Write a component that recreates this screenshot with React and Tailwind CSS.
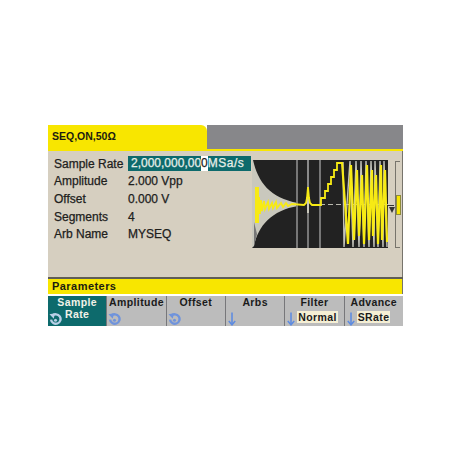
import React from "react";

const params = [
  { label: "Sample Rate", value: "2,000,000,000", active: true },
  { label: "Amplitude", value: "2.000 Vpp" },
  { label: "Offset", value: "0.000 V" },
  { label: "Segments", value: "4" },
  { label: "Arb Name", value: "MYSEQ" },
];

const softkeys = [
  { lines: ["Sample", "Rate"], icon: "knob", active: true },
  { lines: ["Amplitude"], icon: "knob" },
  { lines: ["Offset"], icon: "knob" },
  { lines: ["Arbs"], icon: "arrow" },
  { lines: ["Filter"], icon: "arrow", chip: "Normal" },
  { lines: ["Advance"], icon: "arrow", chip: "SRate" },
];

// chirp at the right of the plot, x of each yellow peak
const peaks = [341, 351, 357, 362, 367, 372, 376, 381, 385];

const yellowChirp = () => {
  let d = "M342 162";
  peaks.slice(1).forEach((x, i) => {
    d += ` L${x - 3} ${244 - (i % 3) * 4} L${x} ${165 + (i % 3) * 5}`;
  });
  return d + " L387 242";
};

const grayChirp = () => {
  let d = "M343 162 L344 247";
  peaks.slice(1).forEach((x) => {
    d += ` L${x - 1} 161 L${x + 2} 247`;
  });
  return d;
};

const KnobIcon = ({ color }) => (
  <svg width="13" height="14" viewBox="0 0 12 13" fill="none" stroke={color}>
    <path d="M3 3.6 A4.4 4.4 0 1 1 1.9 7" strokeWidth="2.2" />
    <path d="M0.4 2 L5.4 1.2 L4.4 6.2 Z" fill={color} stroke="none" />
    <circle cx="6" cy="7.6" r="1.4" fill={color} stroke="none" />
  </svg>
);

const ArrowIcon = () => (
  <svg width="8" height="14" viewBox="0 0 8 14" fill="none" stroke="#5f8ce0" strokeWidth="1.6">
    <path d="M4 0.5 V12.5" />
    <path d="M0.8 9 L4 12.8 L7.2 9" />
  </svg>
);

const Waveform = () => (
  <svg width="136" height="88" viewBox="252 160 136 88" className="bg-[#222222]">
    <path d="M252 160 L253 160 C258 182 270 198 298 203 L298 206 C272 210 258 226 254 246 L252 248 Z" fill="#c9c8bd" />
    <path d="M254 222 L254 246 L257 234 Z" fill="#777777" />
    <path d="M297 160 V248" stroke="#777777" strokeWidth="2" />
    <path d="M308 160 V187" stroke="#8a8a8a" strokeWidth="2" />
    <path d="M308 187 V213" stroke="#c9c8bd" strokeWidth="2" />
    <path d="M308 213 V248" stroke="#777777" strokeWidth="2" />
    <path d="M320 160 V248" stroke="#777777" strokeWidth="2" />
    <path d="M320 204.5 H388" stroke="#b9b8ae" strokeWidth="1" strokeDasharray="5 3" />
    <path d={grayChirp()} stroke="#c4c4bb" strokeWidth="1.4" fill="none" />
    <path d={yellowChirp()} stroke="#f7ea14" strokeWidth="2.2" fill="none" />
    <path d="M257 187 V223" stroke="#f7ea14" strokeWidth="4" />
    <path
      d="M259 197 L260 214 L261 200 L262 211 L264 201 L265 209 L268 202 L269 209 L272 203 L273 208 L276 202 L277 208 L281 203 L283 207 L286 203 L288 206 L292 204 L304 205 L306 203 L307 198 L308 187 L309 198 L310 203 L312 205 L321 205 L321 198 L325 198 L325 191 L328 191 L328 184 L331 184 L331 177 L334 177 L334 170 L337 170 L337 163 L342 163"
      stroke="#f7ea14"
      strokeWidth="1.8"
      fill="none"
    />
  </svg>
);

const Softkey = ({ lines, icon, active, chip }) => (
  <div
    className={`relative h-[30px] text-center font-bold text-[10.5px] leading-[12px] tracking-[0.4px] ${
      active ? "bg-[#0d6a6c] text-[#f2f2e8]" : "bg-[#bcbcbc] text-[#1a1a1a]"
    }`}
  >
    {lines.map((line) => (
      <div key={line}>{line}</div>
    ))}
    {chip && (
      <div className="absolute left-[12px] bottom-[3px] h-[12px] px-[1px] bg-[#f5efd4] leading-[12px]">
        {chip}
      </div>
    )}
    <div className={`absolute bottom-[0px] ${icon === "knob" ? "left-[1px]" : "left-[2px]"}`}>
      {icon === "knob" ? <KnobIcon color={active ? "#b9cfe6" : "#6f93dc"} /> : <ArrowIcon />}
    </div>
  </div>
);

export default function App() {
  return (
    <div
      className="w-[450px] h-[450px] bg-white pt-[125px] pl-[48px]"
      style={{ fontFamily: '"Liberation Sans", Arial, sans-serif' }}
    >
      <div className="w-[355px]">
        {/* status tab */}
        <div className="flex h-[26px]">
          <div className="w-[159px] bg-[#f8e600] rounded-tr-[6px] pl-[4px] pt-[5px] font-bold text-[10.5px] leading-[13px] text-[#1c1c10]">
            SEQ,ON,50Ω
          </div>
          <div className="flex-1 flex flex-col">
            <div className="h-[24px] bg-[#87878a]" />
            <div className="h-[2px] bg-[#f8e600]" />
          </div>
        </div>

        {/* parameter area */}
        <div className="flex h-[126px] bg-[#d6cfc0] border-r border-[#77746c]">
          <div className="w-[204px] pt-[4px] pl-[6px]">
            {params.map((p) => (
              <div
                key={p.label}
                className="flex h-[17.6px] items-center text-[12px] text-[#20201c] [-webkit-text-stroke:0.25px]"
              >
                <div className="w-[74px] shrink-0 whitespace-nowrap">{p.label}</div>
                {p.active ? (
                  <div className="flex shrink-0 w-[123px] h-[15px] items-center pl-[3px] bg-[#0d6a6c] text-[#e9efe9] leading-[15px] whitespace-nowrap">
                    2,000,000,00
                    <span className="bg-white text-[#20201c]">0</span>
                    <span className="tracking-[0.5px]">MSa/s</span>
                  </div>
                ) : (
                  <div>{p.value}</div>
                )}
              </div>
            ))}
          </div>
          <div className="pt-[9px]">
            <Waveform />
          </div>
          {/* scroll bracket */}
          <div className="relative w-[14px] mt-[10px] h-[87px]">
            <div className="absolute left-[7px] top-0 w-[5px] h-full border-y border-l border-[#77746c]" />
            <div className="absolute left-[8px] top-[34px] w-[5px] h-[20px] bg-[#f8e600] border border-[#8d8a3a]" />
            <div className="absolute left-[0px] top-[44px] w-[6px] h-[1px] bg-[#333333]" />
            <div className="absolute left-[1px] top-[46px] w-0 h-0 border-x-[3px] border-x-transparent border-t-[6px] border-t-[#333333]" />
          </div>
        </div>

        {/* parameters title */}
        <div className="h-[2px] bg-[#5f5d56]" />
        <div className="h-[15px] bg-[#f8e600] pl-[4px] font-bold text-[11px] leading-[15px] tracking-[0.45px] text-[#1c1c10] border-r border-[#77746c]">
          Parameters
        </div>

        {/* softkeys */}
        <div className="grid grid-cols-6 gap-x-[1px] mt-[2px] bg-[#77777a]">
          {softkeys.map((k) => (
            <Softkey key={k.lines[0]} {...k} />
          ))}
        </div>
      </div>
    </div>
  );
}
